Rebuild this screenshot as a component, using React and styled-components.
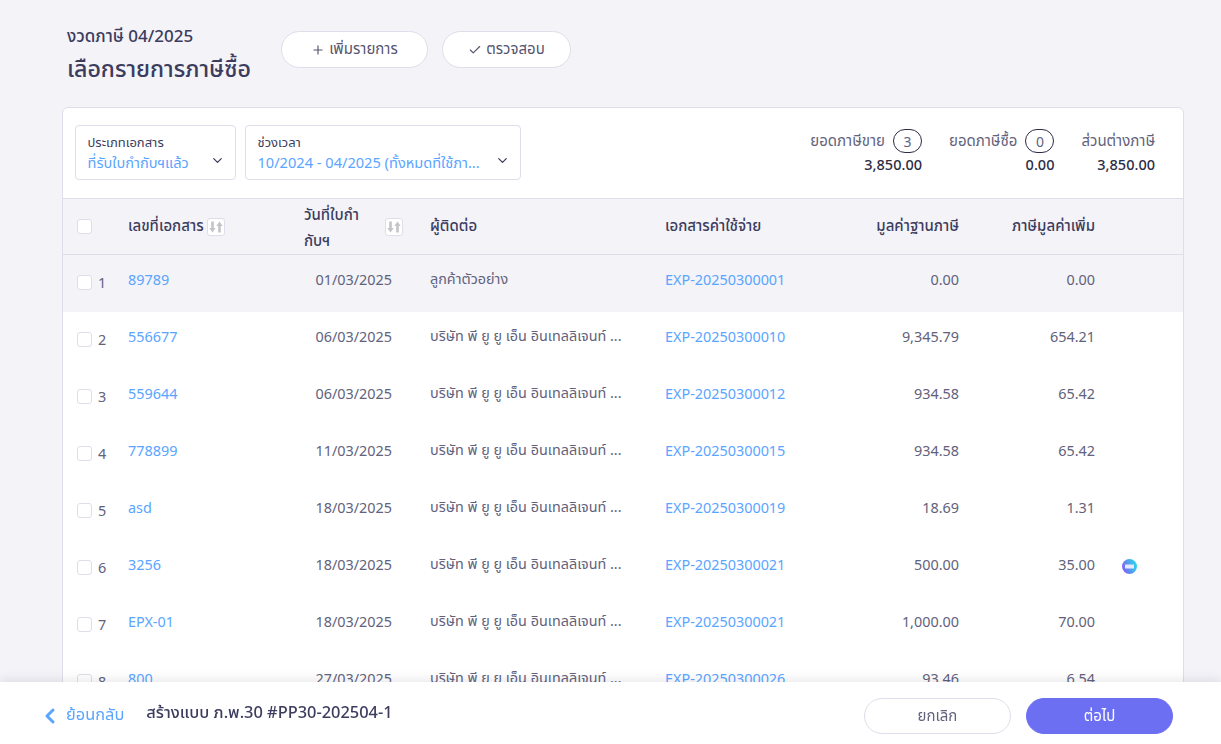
import React from 'react';
import styled, { createGlobalStyle } from 'styled-components';
import { ChevronDown, ChevronLeft, Plus, Check } from 'lucide-react';

const GlobalStyle = createGlobalStyle`
  html, body {
    margin: 0;
    height: 100%;
    overflow: hidden;
    background: #f3f3f8;
    font-family: "Noto Sans", "Noto Sans Thai", "Noto Sans CJK SC", sans-serif;
    color: #3c3c5e;
  }
  * { box-sizing: border-box; }
`;

const Page = styled.div`
  height: 744px;
  overflow: hidden;
  padding: 0 37px 0 62px;
`;

const Header = styled.div`
  display: flex;
  align-items: flex-start;
  height: 107px;
  padding: 24px 0 0 5px;
`;

const Titles = styled.div`
  width: 214px;
`;

const Period = styled.div`
  font-size: 17px;
  line-height: 24px;
  font-weight: 500;
`;

const Title = styled.h1`
  margin: 5px 0 0;
  font-size: 23.2px;
  line-height: 30px;
  font-weight: 500;
  white-space: nowrap;
`;

const Actions = styled.div`
  display: flex;
  gap: 14px;
  padding-top: 7px;
`;

const PillButton = styled.button`
  display: flex;
  align-items: center;
  justify-content: center;
  gap: 4px;
  width: ${({ $w }) => $w}px;
  height: 37px;
  padding: 0;
  border: 1px solid #dedeea;
  border-radius: 19px;
  background: #fff;
  color: #55556f;
  font: inherit;
  font-size: 15px;
`;

const Card = styled.div`
  background: #fff;
  border: 1px solid #dedeea;
  border-radius: 6px 6px 0 0;
`;

const Toolbar = styled.div`
  display: flex;
  justify-content: space-between;
  height: 90px;
  padding: 17px 28px 0 12px;
`;

const Filters = styled.div`
  display: flex;
  gap: 9px;
`;

const Filter = styled.div`
  position: relative;
  width: ${({ $w }) => $w}px;
  height: 55px;
  padding: 6px 11.5px;
  border: 1px solid #dedeea;
  border-radius: 4px;
`;

const FilterLabel = styled.div`
  font-size: 13px;
  line-height: 20px;
`;

const FilterValue = styled.div`
  font-size: 14.6px;
  line-height: 21px;
  color: #5aa5ff;
  white-space: nowrap;
`;

const FilterArrow = styled(ChevronDown)`
  position: absolute;
  right: 10px;
  top: 27px;
  color: #3c3c5e;
`;

const Summary = styled.div`
  display: flex;
  gap: 27px;
  padding-top: 4px;
`;

const SummaryItem = styled.div`
  text-align: right;
`;

const SummaryLabel = styled.div`
  display: flex;
  align-items: center;
  justify-content: flex-end;
  gap: 8px;
  height: 24px;
  font-size: 15px;
  color: #62627c;
`;

const Count = styled.span`
  display: inline-flex;
  align-items: center;
  justify-content: center;
  width: 29px;
  height: 24px;
  border: 1px solid #2c2c44;
  border-radius: 12px;
  font-size: 14px;
`;

const SummaryValue = styled.div`
  font-size: 14.5px;
  line-height: 22px;
  font-weight: 500;
  color: #2c2c44;
`;

const columns = '65px 176px 126px 235px 150px 144px 136px 88px';

const HeadRow = styled.div`
  display: grid;
  grid-template-columns: ${columns};
  align-items: center;
  height: 57px;
  background: #f3f3f8;
  border-top: 1px solid #dedeea;
  border-bottom: 1px solid #dedeea;
  font-size: 15px;
  font-weight: 500;
`;

const Row = styled.div`
  display: grid;
  grid-template-columns: ${columns};
  align-items: center;
  height: 57px;
  padding-bottom: 8px;
  font-size: 14.4px;
  background: ${({ $active }) => ($active ? '#f3f3f8' : '#fff')};
`;

const Box = styled.span`
  display: inline-block;
  flex: none;
  width: 15px;
  height: 15px;
  background: #fff;
  border: 1px solid #dedeea;
  border-radius: 3px;
`;

const CheckCell = styled.div`
  display: flex;
  align-items: center;
  gap: 6px;
  padding-left: 14px;
  color: #62627c;
`;

const RowCheck = styled(CheckCell)`
  padding-top: 6px;
`;

const HeadCell = styled.div`
  display: flex;
  align-items: center;
  gap: 3px;
`;

const DateHead = styled(HeadCell)`
  justify-content: space-between;
  padding-right: 27px;
  line-height: 26px;
`;

const DateHeadText = styled.span`
  width: 72px;
`;

const SortIcon = styled.span`
  display: inline-flex;
  align-items: center;
  justify-content: center;
  flex: none;
  width: 18px;
  height: 18px;
  background: #fff;
  border: 1px solid #dedeea;
  border-radius: 3px;
  color: #c4c4c8;
`;

const RightHead = styled.div`
  text-align: right;
`;

const DocLink = styled.a`
  color: #5aa5ff;
  text-decoration: none;
`;

const DateCell = styled.div`
  text-align: right;
  padding-right: 38px;
  color: #62627c;
`;

const Contact = styled.div`
  overflow: hidden;
  white-space: nowrap;
  color: #62627c;
`;

const Amount = styled.div`
  text-align: right;
  color: #62627c;
`;

const IconCell = styled.div`
  display: flex;
  padding: 3px 0 0 27px;
`;

const Footer = styled.div`
  position: fixed;
  left: 0;
  right: 0;
  bottom: 0;
  display: flex;
  align-items: center;
  height: 62px;
  padding: 6px 48px 0 38px;
  background: #fff;
  box-shadow: 0 -2px 10px rgba(60, 60, 94, 0.12);
`;

const BackLink = styled.a`
  display: flex;
  align-items: center;
  gap: 4px;
  margin-bottom: 3px;
  color: #5aa5ff;
  font-size: 16.4px;
`;

const BackArrow = styled(ChevronLeft)`
  margin-top: 3px;
`;

const FooterTitle = styled.div`
  margin: 0 0 7px 22px;
  font-size: 16.4px;
  font-weight: 500;
  flex: 1;
`;

const FooterButton = styled.button`
  width: 147px;
  height: 36px;
  margin-left: 15px;
  border: 1px solid ${({ $primary }) => ($primary ? '#6c6ff2' : '#dedeea')};
  border-radius: 18px;
  background: ${({ $primary }) => ($primary ? '#6c6ff2' : '#fff')};
  color: ${({ $primary }) => ($primary ? '#fff' : '#62627c')};
  font: inherit;
  font-size: 15px;
`;

const company = 'บริษัท พี ยู ยู เอ็น อินเทลลิเจนท์ ...';

const rows = [
  ['89789', '01/03/2025', 'ลูกค้าตัวอย่าง', 'EXP-20250300001', '0.00', '0.00'],
  ['556677', '06/03/2025', company, 'EXP-20250300010', '9,345.79', '654.21'],
  ['559644', '06/03/2025', company, 'EXP-20250300012', '934.58', '65.42'],
  ['778899', '11/03/2025', company, 'EXP-20250300015', '934.58', '65.42'],
  ['asd', '18/03/2025', company, 'EXP-20250300019', '18.69', '1.31'],
  ['3256', '18/03/2025', company, 'EXP-20250300021', '500.00', '35.00', true],
  ['EPX-01', '18/03/2025', company, 'EXP-20250300021', '1,000.00', '70.00'],
  ['800', '27/03/2025', company, 'EXP-20250300026', '93.46', '6.54'],
];

function Sort() {
  return (
    <SortIcon>
      <svg width="14" height="12" viewBox="0 0 14 12" fill="currentColor">
        <path d="M2.2 0.5h2.6v6.5h1.9L3.5 11.5 0.3 7h1.9z" />
        <path d="M9.2 11.5h2.6V5h1.9L10.5 0.5 7.3 5h1.9z" />
      </svg>
    </SortIcon>
  );
}

function CardBadge() {
  return (
    <svg width="15" height="15" viewBox="0 0 15 15">
      <defs>
        <linearGradient id="badge" x1="0" y1="0.7" x2="1" y2="0.3">
          <stop offset="0.1" stopColor="#7a68f5" />
          <stop offset="0.9" stopColor="#2fd0ea" />
        </linearGradient>
      </defs>
      <circle cx="7.5" cy="7.5" r="7.5" fill="url(#badge)" />
      <rect x="3" y="5.5" width="9" height="4" rx="0.5" fill="#e4e9ff" />
    </svg>
  );
}

export default function App() {
  return (
    <>
      <GlobalStyle />
      <Page>
        <Header>
          <Titles>
            <Period>งวดภาษี 04/2025</Period>
            <Title>เลือกรายการภาษีซื้อ</Title>
          </Titles>
          <Actions>
            <PillButton $w={147}>
              <Plus size={14} />
              เพิ่มรายการ
            </PillButton>
            <PillButton $w={129}>
              <Check size={14} />
              ตรวจสอบ
            </PillButton>
          </Actions>
        </Header>
        <Card>
          <Toolbar>
            <Filters>
              <Filter $w={161}>
                <FilterLabel>ประเภทเอกสาร</FilterLabel>
                <FilterValue>ที่รับใบกำกับฯแล้ว</FilterValue>
                <FilterArrow size={15} />
              </Filter>
              <Filter $w={276}>
                <FilterLabel>ช่วงเวลา</FilterLabel>
                <FilterValue>10/2024 - 04/2025 (ทั้งหมดที่ใช้ภา...</FilterValue>
                <FilterArrow size={15} />
              </Filter>
            </Filters>
            <Summary>
              <SummaryItem>
                <SummaryLabel>ยอดภาษีขาย <Count>3</Count></SummaryLabel>
                <SummaryValue>3,850.00</SummaryValue>
              </SummaryItem>
              <SummaryItem>
                <SummaryLabel>ยอดภาษีซื้อ <Count>0</Count></SummaryLabel>
                <SummaryValue>0.00</SummaryValue>
              </SummaryItem>
              <SummaryItem>
                <SummaryLabel>ส่วนต่างภาษี</SummaryLabel>
                <SummaryValue>3,850.00</SummaryValue>
              </SummaryItem>
            </Summary>
          </Toolbar>
          <HeadRow>
            <CheckCell><Box /></CheckCell>
            <HeadCell>เลขที่เอกสาร <Sort /></HeadCell>
            <DateHead>
              <DateHeadText>วันที่ใบกำกับฯ</DateHeadText>
              <Sort />
            </DateHead>
            <HeadCell>ผู้ติดต่อ</HeadCell>
            <HeadCell>เอกสารค่าใช้จ่าย</HeadCell>
            <RightHead>มูลค่าฐานภาษี</RightHead>
            <RightHead>ภาษีมูลค่าเพิ่ม</RightHead>
            <span />
          </HeadRow>
          {rows.map((r, i) => (
            <Row key={r[0]} $active={i === 0}>
              <RowCheck><Box />{i + 1}</RowCheck>
              <div><DocLink>{r[0]}</DocLink></div>
              <DateCell>{r[1]}</DateCell>
              <Contact>{r[2]}</Contact>
              <div><DocLink>{r[3]}</DocLink></div>
              <Amount>{r[4]}</Amount>
              <Amount>{r[5]}</Amount>
              <IconCell>{r[6] && <CardBadge />}</IconCell>
            </Row>
          ))}
        </Card>
      </Page>
      <Footer>
        <BackLink><BackArrow size={24} strokeWidth={3} />ย้อนกลับ</BackLink>
        <FooterTitle>สร้างแบบ ภ.พ.30 #PP30-202504-1</FooterTitle>
        <FooterButton>ยกเลิก</FooterButton>
        <FooterButton $primary>ต่อไป</FooterButton>
      </Footer>
    </>
  );
}
